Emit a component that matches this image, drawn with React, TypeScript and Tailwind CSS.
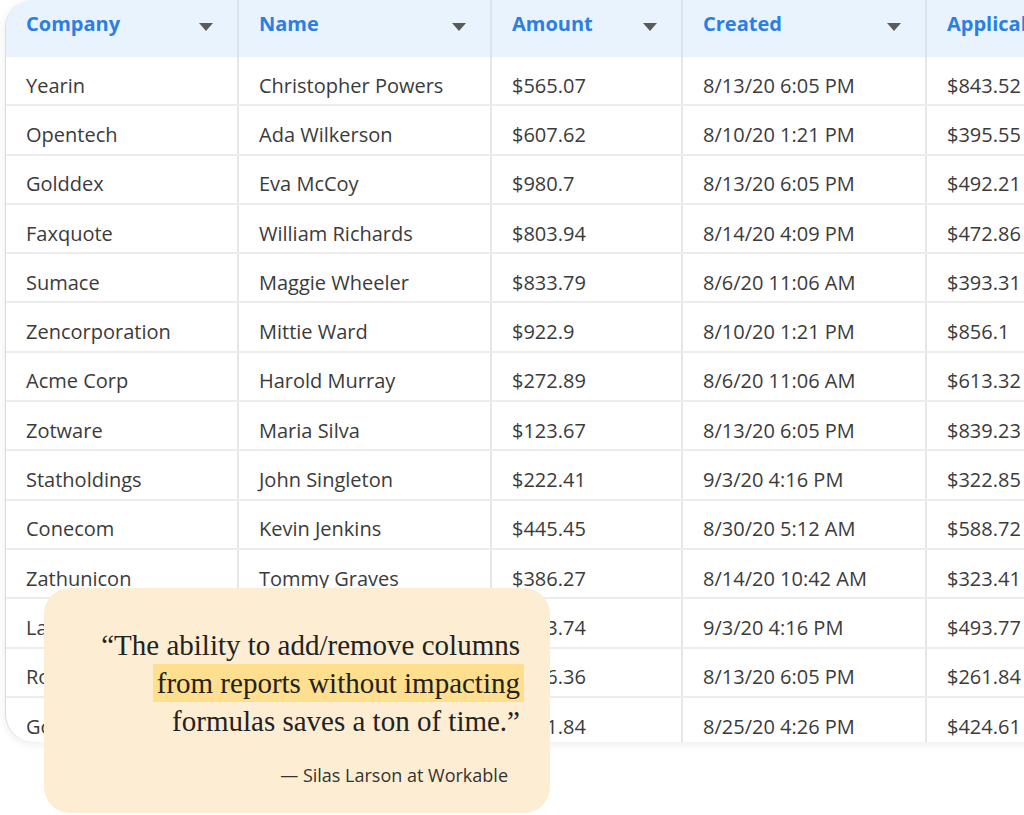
const cols = [
  { label: "Company", w: 233 },
  { label: "Name", w: 253 },
  { label: "Amount", w: 191 },
  { label: "Created", w: 244 },
  { label: "Applicable Amount", w: 200 },
];

const rows = [
  ["Yearin", "Christopher Powers", "$565.07", "8/13/20 6:05 PM", "$843.52"],
  ["Opentech", "Ada Wilkerson", "$607.62", "8/10/20 1:21 PM", "$395.55"],
  ["Golddex", "Eva McCoy", "$980.7", "8/13/20 6:05 PM", "$492.21"],
  ["Faxquote", "William Richards", "$803.94", "8/14/20 4:09 PM", "$472.86"],
  ["Sumace", "Maggie Wheeler", "$833.79", "8/6/20 11:06 AM", "$393.31"],
  ["Zencorporation", "Mittie Ward", "$922.9", "8/10/20 1:21 PM", "$856.1"],
  ["Acme Corp", "Harold Murray", "$272.89", "8/6/20 11:06 AM", "$613.32"],
  ["Zotware", "Maria Silva", "$123.67", "8/13/20 6:05 PM", "$839.23"],
  ["Statholdings", "John Singleton", "$222.41", "9/3/20 4:16 PM", "$322.85"],
  ["Conecom", "Kevin Jenkins", "$445.45", "8/30/20 5:12 AM", "$588.72"],
  ["Zathunicon", "Tommy Graves", "$386.27", "8/14/20 10:42 AM", "$323.41"],
  ["Labdrill", "Lucy Ford", "$563.74", "9/3/20 4:16 PM", "$493.77"],
  ["Rotcore", "Ruth Hughes", "$296.36", "8/13/20 6:05 PM", "$261.84"],
  ["Golddex", "Mike Porter", "$761.84", "8/25/20 4:26 PM", "$424.61"],
];

function Caret() {
  return (
    <svg width="14" height="8" viewBox="0 0 14 8" className="shrink-0">
      <path d="M0 0h14L7 8z" fill="#5a5a5a" />
    </svg>
  );
}

export default function App() {
  const font = { fontFamily: '"Open Sans", Lato, sans-serif' };
  return (
    <div className="relative h-[815px] w-[1024px] overflow-hidden bg-white" style={font}>
      <div className="ml-[5px] h-[742px] w-[1200px] overflow-hidden rounded-bl-[28px] rounded-tl-[28px] border-l border-[#dcdcdc] bg-white shadow-[0_2px_10px_rgba(0,0,0,0.08)]">
        <div className="flex h-[57px] bg-[#e9f3fd]">
          {cols.map((c) => (
            <div
              key={c.label}
              style={{ width: c.w }}
              className="flex shrink-0 items-center justify-between border-r-2 border-[#dde3ea] pl-[20px] pr-[24px] text-[20px] font-bold text-[#2b7ee2]"
            >
              <span className="-mt-[10px] whitespace-nowrap">{c.label}</span>
              <span className="-mt-[4px]"><Caret /></span>
            </div>
          ))}
        </div>
        {rows.map((r, i) => (
          <div key={i} className="flex h-[49.3px] border-b-2 border-[#ececec]">
            {r.map((v, j) => (
              <div
                key={j}
                style={{ width: cols[j].w }}
                className="flex shrink-0 items-center whitespace-nowrap border-r-2 border-[#e6e6e6] pl-[20px] pt-[10px] text-[20px] text-[#3b3b3b]"
              >
                {v}
              </div>
            ))}
          </div>
        ))}
      </div>

      <div className="absolute left-[44px] top-[588px] flex h-[225px] w-[506px] flex-col items-end rounded-[26px] bg-[#fdeed3] pr-[30px] pt-[38px]">
        <div
          className="flex flex-col items-end text-[29px] leading-[38px] text-[#222]"
          style={{ fontFamily: '"Liberation Serif", "DejaVu Serif", serif' }}
        >
          <span>“The ability to add/remove columns</span>
          <span className="-mr-[4px] bg-[#fddf8f] px-[4px]">from reports without impacting</span>
          <span>formulas saves a ton of time.”</span>
        </div>
        <div className="mt-[22px] pr-[12px] text-[18px] text-[#333]">— Silas Larson at Workable</div>
      </div>
    </div>
  );
}
